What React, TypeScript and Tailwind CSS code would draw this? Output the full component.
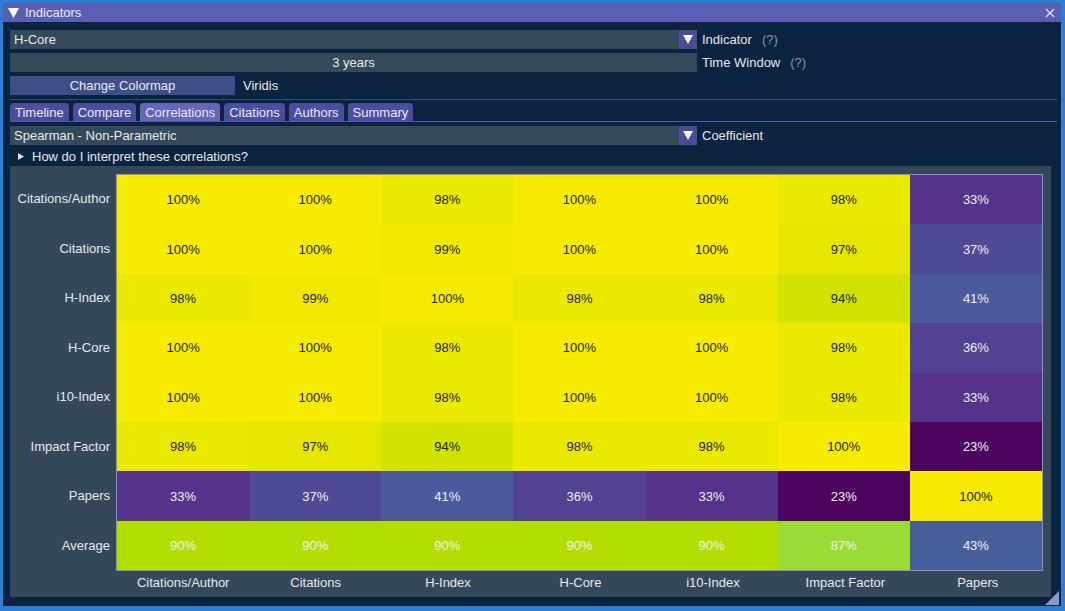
import React from "react";

const cols = ["Citations/Author", "Citations", "H-Index", "H-Core", "i10-Index", "Impact Factor", "Papers"];
const rows = ["Citations/Author", "Citations", "H-Index", "H-Core", "i10-Index", "Impact Factor", "Papers", "Average"];
const data: number[][] = [
  [100, 100, 98, 100, 100, 98, 33],
  [100, 100, 99, 100, 100, 97, 37],
  [98, 99, 100, 98, 98, 94, 41],
  [100, 100, 98, 100, 100, 98, 36],
  [100, 100, 98, 100, 100, 98, 33],
  [98, 97, 94, 98, 98, 100, 23],
  [33, 37, 41, 36, 33, 23, 100],
  [90, 90, 90, 90, 90, 87, 43],
];

const colorMap: Record<number, string> = {
  100: "#f7ec00",
  99: "#f1ea00",
  98: "#ebe900",
  97: "#e5e700",
  94: "#d3e300",
  90: "#b3df00",
  87: "#99dc35",
  43: "#465f9b",
  41: "#4a5a9c",
  37: "#4f4a96",
  36: "#524291",
  33: "#54348b",
  23: "#4c035f",
};

function Arrow() {
  return (
    <div className="flex h-full w-[18px] items-center justify-center bg-[#474f92]">
      <svg width="10" height="9" viewBox="0 0 10 9">
        <polygon points="0,0 10,0 5,9" fill="#ffffff" />
      </svg>
    </div>
  );
}

function Combo({ text, label, help }: { text: string; label: string; help?: boolean }) {
  return (
    <div className="flex h-[19px] items-center">
      <div className="flex h-full w-[687px] items-center bg-[#36495b]">
        <div className="flex-1 pl-[4px] text-[#e8eaee]">{text}</div>
        <Arrow />
      </div>
      <div className="ml-[5px] text-[#e4e7ec]">{label}</div>
      {help && <div className="ml-[10px] text-[#8b97a6]">(?)</div>}
    </div>
  );
}

export default function App() {
  const tabs = ["Timeline", "Compare", "Correlations", "Citations", "Authors", "Summary"];
  return (
    <div
      className="relative h-[611px] w-[1065px] overflow-hidden bg-[#2d7fd5] pl-[3px] pt-[3px] text-[13px] leading-none"
      style={{ fontFamily: '"Liberation Sans", Arial, sans-serif' }}
    >
      <div className="flex h-[603px] w-[1058px] flex-col overflow-hidden rounded-t-[5px] bg-[#0a2440]">
        {/* title */}
        <div className="flex h-[19px] items-center bg-[#5b5fb4] text-[#e9e9f4]">
          <svg className="ml-[5px]" width="11" height="10" viewBox="0 0 11 10">
            <polygon points="0,0 11,0 5.5,10" fill="#ffffff" />
          </svg>
          <span className="ml-[6px]">Indicators</span>
          <svg className="ml-auto mr-[6px]" width="10" height="10" viewBox="0 0 10 10">
            <path d="M1 1 L9 9 M9 1 L1 9" stroke="#e6e6f2" strokeWidth="1.3" />
          </svg>
        </div>
        <div className="flex flex-1 flex-col pl-[7px] pr-[4px] pt-[8px]">
          <Combo text="H-Core" label="Indicator" help />
          <div className="mt-[4px] flex h-[19px] items-center">
            <div className="flex h-full w-[687px] items-center justify-center bg-[#36495b] text-[#e8eaee]">3 years</div>
            <div className="ml-[5px] text-[#e4e7ec]">Time Window</div>
            <div className="ml-[10px] text-[#8b97a6]">(?)</div>
          </div>
          <div className="mt-[4px] flex h-[19px] items-center">
            <div className="flex h-full w-[225px] items-center justify-center bg-[#3e4f88] text-[#e8eaf2]">Change Colormap</div>
            <div className="ml-[8px] text-[#e8eaee]">Viridis</div>
          </div>
          <div className="mt-[4px] h-[1px] bg-[#3b5064]" />
          {/* tabs */}
          <div className="mt-[3px] flex h-[19px] items-end gap-[4px] border-b border-[#5559ad]">
            {tabs.map((t) => (
              <div
                key={t}
                className={`flex h-[18px] items-center rounded-t-[4px] px-[5px] text-[#e8e9f4] ${
                  t === "Correlations" ? "bg-[#6366b9]" : "bg-[#4b4e9e]"
                }`}
              >
                {t}
              </div>
            ))}
          </div>
          <div className="mt-[4px]">
            <Combo text="Spearman - Non-Parametric" label="Coefficient" />
          </div>
          <div className="mt-[2px] flex h-[19px] items-center text-[#e4e7ec]">
            <svg className="ml-[8px]" width="6" height="7" viewBox="0 0 6 7">
              <polygon points="0,0 6,3.5 0,7" fill="#e4e7ec" />
            </svg>
            <span className="ml-[8px]">How do I interpret these correlations?</span>
          </div>
          {/* heatmap panel */}
          <div className="flex h-[431px] w-[1041px] flex-col bg-[#34485a] pt-[8px]">
            <div className="flex">
              <div className="flex w-[100px] flex-col">
                {rows.map((r) => (
                  <div key={r} className="flex h-[49.5px] items-center justify-end text-[#e6e9ee]">
                    {r}
                  </div>
                ))}
              </div>
              <div className="ml-[6px] w-[927px] border border-[#8d93bd]">
                {data.map((row, i) => (
                  <div key={i} className="grid h-[49.4px] grid-cols-7">
                    {row.map((v, j) => (
                      <div
                        key={j}
                        className={`flex items-center justify-center ${v >= 94 ? "text-[#1c1c1c]" : "text-[#eef0f4]"}`}
                        style={{ backgroundColor: colorMap[v] }}
                      >
                        {v}%
                      </div>
                    ))}
                  </div>
                ))}
              </div>
            </div>
            <div className="ml-[107px] mt-[5px] grid w-[927px] grid-cols-7 text-[#e6e9ee]">
              {cols.map((c) => (
                <div key={c} className="text-center">
                  {c}
                </div>
              ))}
            </div>
          </div>
        </div>
      </div>
      <div className="absolute left-[1045px] top-[591px] h-0 w-0 border-b-[14px] border-l-[14px] border-b-[#8a9ac8] border-l-transparent" />
    </div>
  );
}
